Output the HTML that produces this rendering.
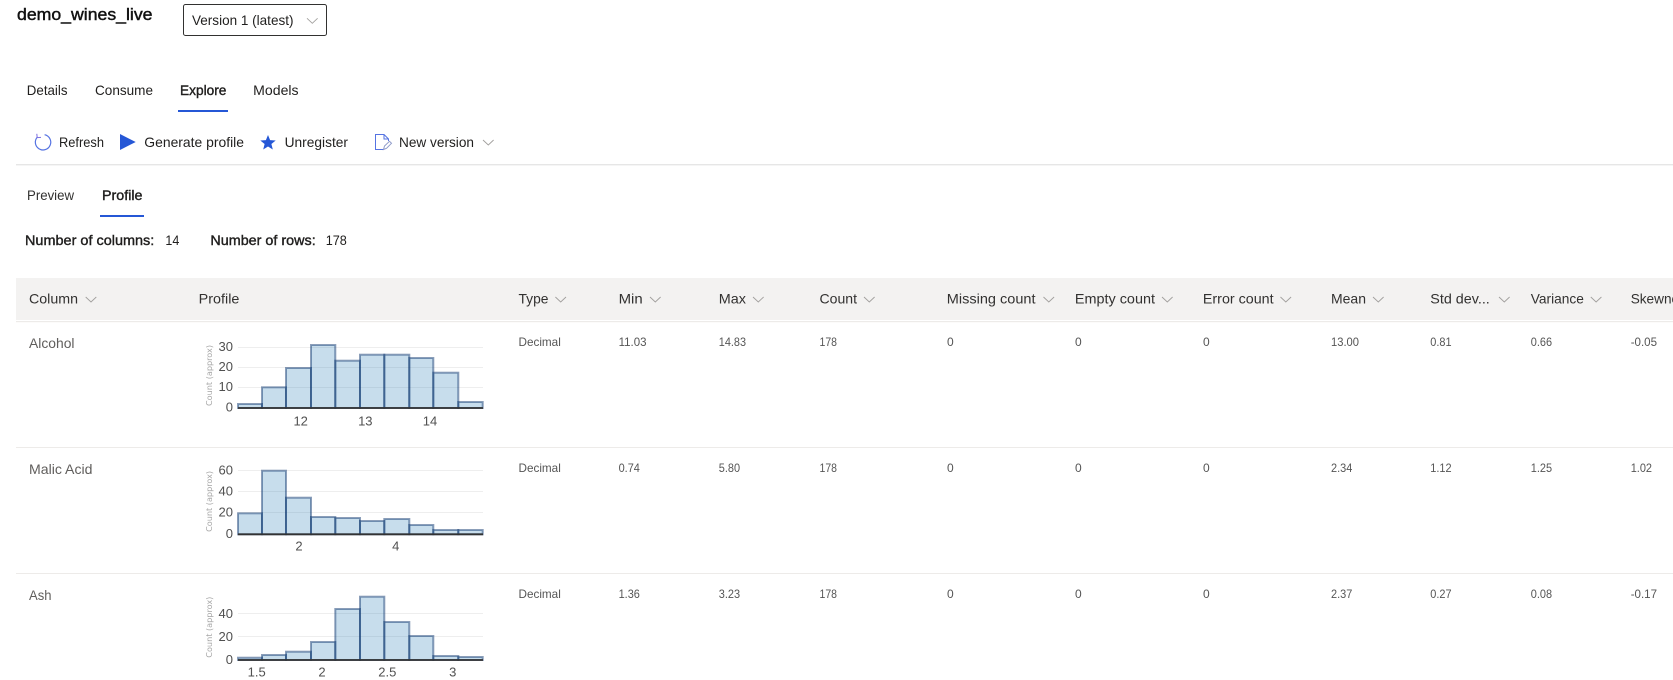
<!DOCTYPE html>
<html lang="en"><head><meta charset="utf-8"><title>demo_wines_live</title>
<style>
html,body{margin:0;padding:0;background:#fff;width:1673px;height:680px;overflow:hidden}
svg{display:block}
text{font-family:"Liberation Sans",sans-serif}
.h{font-size:14px;fill:#323130}
.b{font-size:14px;fill:#201f1e}
.s{font-size:14px;fill:#201f1e;stroke:#201f1e;stroke-width:.4}
.n{font-size:14px;fill:#605e5c}
.v{font-size:12px;fill:#555}
.t{font-size:13px;fill:#505050}
.yl{font-size:8px;fill:#a6a6a6;font-family:"DejaVu Sans",sans-serif}
.ch{fill:none;stroke:#a19f9d;stroke-width:.9}
.bar rect{fill:rgba(31,119,180,.25);stroke:rgba(8,48,107,.47);stroke-width:2}
.g{stroke:#eee;stroke-width:1}
.ax{stroke:#333;stroke-width:1.8}
</style></head><body>
<svg xmlns="http://www.w3.org/2000/svg" width="1673" height="680" viewBox="0 0 1673 680">
<defs>
<polyline id="c" class="ch" points="0,0 5.3,5 10.6,0"/>
</defs>

<!-- title -->
<text x="17" y="20" font-size="17" fill="#111" stroke="#111" stroke-width=".45" textLength="135.5" lengthAdjust="spacingAndGlyphs">demo_wines_live</text>
<rect x="183.5" y="4.5" width="143" height="31" rx="2" fill="#fff" stroke="#323130" stroke-width="1"/>
<text class="b" x="192" y="25" textLength="101.5" lengthAdjust="spacingAndGlyphs">Version 1 (latest)</text>
<use href="#c" x="307" y="18.3"/>

<!-- tabs -->
<text class="b" x="26.8" y="95" textLength="40.7" lengthAdjust="spacingAndGlyphs">Details</text>
<text class="b" x="95" y="95" textLength="58" lengthAdjust="spacingAndGlyphs">Consume</text>
<text class="s" x="180" y="95" textLength="46.4" lengthAdjust="spacingAndGlyphs">Explore</text>
<text class="b" x="253.2" y="95" textLength="45.4" lengthAdjust="spacingAndGlyphs">Models</text>
<rect x="178" y="110" width="50" height="2" fill="#2557d6"/>

<!-- toolbar -->
<path d="M37.4,137 A7.7,7.7 0 1 0 44.6,134.7" fill="none" stroke="#5573e2" stroke-width="1.2"/>
<path d="M36.8,133.8 L37.2,137.6 L41,137.4" fill="none" stroke="#7d6fe0" stroke-width="1"/>
<text class="b" x="59" y="147" textLength="45" lengthAdjust="spacingAndGlyphs">Refresh</text>
<polygon points="120,134 135.7,142 120,150" fill="#2557d6"/>
<text class="b" x="144.3" y="147" textLength="99.7" lengthAdjust="spacingAndGlyphs">Generate profile</text>
<polygon points="268,135 270.1,140.1 275.7,140.5 271.4,144 272.8,149.5 268,146.5 263.2,149.5 264.6,144 260.3,140.5 265.9,140.1" fill="#2557d6"/>
<text class="b" x="284.6" y="147" textLength="63.4" lengthAdjust="spacingAndGlyphs">Unregister</text>
<path d="M384,149.5 H375.5 V134.5 H384 L388.5,139 V141 M384,134.5 V139 H388.5" fill="none" stroke="#5573e2" stroke-width="1"/>
<path d="M383.5,149.5 L384.5,146 L389.5,141.3 L391.5,143.3 L386.5,148.3 Z" fill="none" stroke="#8f9bc9" stroke-width="1"/>
<text class="b" x="399" y="147" textLength="75" lengthAdjust="spacingAndGlyphs">New version</text>
<use href="#c" x="483" y="140"/>
<rect x="16" y="164" width="1657" height="1.4" fill="#e6e6e6"/>

<!-- sub tabs -->
<text class="b" x="27" y="200" textLength="47" lengthAdjust="spacingAndGlyphs" style="fill:#323130">Preview</text>
<text class="s" x="102" y="200" textLength="40.5" lengthAdjust="spacingAndGlyphs">Profile</text>
<rect x="100" y="215" width="44" height="2" fill="#2557d6"/>

<text class="s" x="25" y="245" textLength="129.3" lengthAdjust="spacingAndGlyphs">Number of columns:</text>
<text class="b" x="165.4" y="245" textLength="13.9" lengthAdjust="spacingAndGlyphs">14</text>
<text class="s" x="210.4" y="245" textLength="105.3" lengthAdjust="spacingAndGlyphs">Number of rows:</text>
<text class="b" x="325.7" y="245" textLength="21.1" lengthAdjust="spacingAndGlyphs">178</text>

<!-- table header -->
<rect x="16" y="278" width="1657" height="42" fill="#f3f2f1"/>
<rect x="16" y="321" width="1657" height="1.2" fill="#edebe9"/>
<text class="h" x="29" y="303.3" textLength="49" lengthAdjust="spacingAndGlyphs">Column</text><use href="#c" x="85.7" y="297"/>
<text class="h" x="198.7" y="303.3" textLength="40.7" lengthAdjust="spacingAndGlyphs">Profile</text>
<text class="h" x="518.5" y="303.3" textLength="30" lengthAdjust="spacingAndGlyphs">Type</text><use href="#c" x="555.4" y="297"/>
<text class="h" x="618.6" y="303.3" textLength="24.1" lengthAdjust="spacingAndGlyphs">Min</text><use href="#c" x="650" y="297"/>
<text class="h" x="718.8" y="303.3" textLength="27.2" lengthAdjust="spacingAndGlyphs">Max</text><use href="#c" x="753" y="297"/>
<text class="h" x="819.5" y="303.3" textLength="37.5" lengthAdjust="spacingAndGlyphs">Count</text><use href="#c" x="864" y="297"/>
<text class="h" x="946.8" y="303.3" textLength="88.7" lengthAdjust="spacingAndGlyphs">Missing count</text><use href="#c" x="1043.5" y="297"/>
<text class="h" x="1074.9" y="303.3" textLength="80.1" lengthAdjust="spacingAndGlyphs">Empty count</text><use href="#c" x="1162" y="297"/>
<text class="h" x="1202.9" y="303.3" textLength="70.7" lengthAdjust="spacingAndGlyphs">Error count</text><use href="#c" x="1280.5" y="297"/>
<text class="h" x="1331" y="303.3" textLength="35" lengthAdjust="spacingAndGlyphs">Mean</text><use href="#c" x="1373" y="297"/>
<text class="h" x="1430.3" y="303.3" textLength="59.5" lengthAdjust="spacingAndGlyphs">Std dev...</text><use href="#c" x="1499" y="297"/>
<text class="h" x="1530.8" y="303.3" textLength="53.1" lengthAdjust="spacingAndGlyphs">Variance</text><use href="#c" x="1590.8" y="297"/>
<text class="h" x="1630.7" y="303.3" textLength="62" lengthAdjust="spacingAndGlyphs">Skewness</text>

<!-- row lines -->
<rect x="16" y="447" width="1657" height="1" fill="#edebe9"/>
<rect x="16" y="573" width="1657" height="1" fill="#edebe9"/>

<!-- row 1 -->
<text class="n" x="29" y="348" textLength="45.5" lengthAdjust="spacingAndGlyphs">Alcohol</text>
<text class="v" x="518.5" y="346" textLength="42.3" lengthAdjust="spacingAndGlyphs">Decimal</text>
<text class="v" x="618.6" y="346" textLength="27.9" lengthAdjust="spacingAndGlyphs">11.03</text>
<text class="v" x="718.8" y="346" textLength="27.2" lengthAdjust="spacingAndGlyphs">14.83</text>
<text class="v" x="819.5" y="346" textLength="17.5" lengthAdjust="spacingAndGlyphs">178</text>
<text class="v" x="947" y="346">0</text><text class="v" x="1075" y="346">0</text><text class="v" x="1203" y="346">0</text>
<text class="v" x="1331" y="346" textLength="28" lengthAdjust="spacingAndGlyphs">13.00</text>
<text class="v" x="1430.3" y="346" textLength="21.3" lengthAdjust="spacingAndGlyphs">0.81</text>
<text class="v" x="1530.8" y="346" textLength="21.3" lengthAdjust="spacingAndGlyphs">0.66</text>
<text class="v" x="1630.7" y="346" textLength="26.3" lengthAdjust="spacingAndGlyphs">-0.05</text>

<!-- row 2 -->
<text class="n" x="29" y="474" textLength="63.5" lengthAdjust="spacingAndGlyphs">Malic Acid</text>
<text class="v" x="518.5" y="472" textLength="42.3" lengthAdjust="spacingAndGlyphs">Decimal</text>
<text class="v" x="618.6" y="472" textLength="21.3" lengthAdjust="spacingAndGlyphs">0.74</text>
<text class="v" x="718.8" y="472" textLength="21.3" lengthAdjust="spacingAndGlyphs">5.80</text>
<text class="v" x="819.5" y="472" textLength="17.5" lengthAdjust="spacingAndGlyphs">178</text>
<text class="v" x="947" y="472">0</text><text class="v" x="1075" y="472">0</text><text class="v" x="1203" y="472">0</text>
<text class="v" x="1331" y="472" textLength="21.3" lengthAdjust="spacingAndGlyphs">2.34</text>
<text class="v" x="1430.3" y="472" textLength="21.3" lengthAdjust="spacingAndGlyphs">1.12</text>
<text class="v" x="1530.8" y="472" textLength="21.3" lengthAdjust="spacingAndGlyphs">1.25</text>
<text class="v" x="1630.7" y="472" textLength="21.3" lengthAdjust="spacingAndGlyphs">1.02</text>

<!-- row 3 -->
<text class="n" x="29" y="600" textLength="22.5" lengthAdjust="spacingAndGlyphs">Ash</text>
<text class="v" x="518.5" y="598" textLength="42.3" lengthAdjust="spacingAndGlyphs">Decimal</text>
<text class="v" x="618.6" y="598" textLength="21.3" lengthAdjust="spacingAndGlyphs">1.36</text>
<text class="v" x="718.8" y="598" textLength="21.3" lengthAdjust="spacingAndGlyphs">3.23</text>
<text class="v" x="819.5" y="598" textLength="17.5" lengthAdjust="spacingAndGlyphs">178</text>
<text class="v" x="947" y="598">0</text><text class="v" x="1075" y="598">0</text><text class="v" x="1203" y="598">0</text>
<text class="v" x="1331" y="598" textLength="21.3" lengthAdjust="spacingAndGlyphs">2.37</text>
<text class="v" x="1430.3" y="598" textLength="21.3" lengthAdjust="spacingAndGlyphs">0.27</text>
<text class="v" x="1530.8" y="598" textLength="21.3" lengthAdjust="spacingAndGlyphs">0.08</text>
<text class="v" x="1630.7" y="598" textLength="26.3" lengthAdjust="spacingAndGlyphs">-0.17</text>

<!-- chart 1 -->
<g class="g"><line x1="238" x2="483" y1="347.5" y2="347.5"/><line x1="238" x2="483" y1="367.5" y2="367.5"/><line x1="238" x2="483" y1="387.5" y2="387.5"/></g>
<g class="bar">
<rect x="238" y="404" width="24" height="4"/><rect x="262" y="387.3" width="24" height="20.7"/><rect x="286" y="368" width="25" height="40"/><rect x="311" y="345" width="24.3" height="63"/><rect x="335.3" y="360.7" width="24.7" height="47.3"/><rect x="360" y="354.7" width="24.3" height="53.3"/><rect x="384.3" y="354.7" width="25" height="53.3"/><rect x="409.3" y="358" width="24" height="50"/><rect x="433.3" y="372.7" width="25" height="35.3"/><rect x="458.3" y="402" width="24.4" height="6"/>
</g>
<line class="ax" x1="238" x2="483" y1="408" y2="408"/>
<text class="t" x="233" y="351" text-anchor="end">30</text><text class="t" x="233" y="371" text-anchor="end">20</text><text class="t" x="233" y="391" text-anchor="end">10</text><text class="t" x="233" y="411.5" text-anchor="end">0</text>
<text class="t" x="300.7" y="425.3" text-anchor="middle">12</text><text class="t" x="365.3" y="425.3" text-anchor="middle">13</text><text class="t" x="430" y="425.3" text-anchor="middle">14</text>
<text class="yl" transform="translate(212,375.5) rotate(-90)" text-anchor="middle" textLength="61" lengthAdjust="spacingAndGlyphs">Count (approx)</text>

<!-- chart 2 -->
<g class="g"><line x1="238" x2="483" y1="470.5" y2="470.5"/><line x1="238" x2="483" y1="491.5" y2="491.5"/><line x1="238" x2="483" y1="512.5" y2="512.5"/></g>
<g class="bar">
<rect x="238" y="513.3" width="24" height="21"/><rect x="262" y="470.7" width="24" height="63.6"/><rect x="286" y="497.7" width="25" height="36.6"/><rect x="311" y="517" width="24.3" height="17.3"/><rect x="335.3" y="518" width="24.7" height="16.3"/><rect x="360" y="521" width="24.3" height="13.3"/><rect x="384.3" y="519" width="25" height="15.3"/><rect x="409.3" y="525" width="24" height="9.3"/><rect x="433.3" y="530" width="25" height="4.3"/><rect x="458.3" y="530" width="24.4" height="4.3"/>
</g>
<line class="ax" x1="238" x2="483" y1="534.3" y2="534.3"/>
<text class="t" x="233" y="474.3" text-anchor="end">60</text><text class="t" x="233" y="495.3" text-anchor="end">40</text><text class="t" x="233" y="516.3" text-anchor="end">20</text><text class="t" x="233" y="537.8" text-anchor="end">0</text>
<text class="t" x="299" y="550.7" text-anchor="middle">2</text><text class="t" x="395.7" y="550.7" text-anchor="middle">4</text>
<text class="yl" transform="translate(212,501.4) rotate(-90)" text-anchor="middle" textLength="61" lengthAdjust="spacingAndGlyphs">Count (approx)</text>

<!-- chart 3 -->
<g class="g"><line x1="238" x2="483" y1="613.5" y2="613.5"/><line x1="238" x2="483" y1="636.5" y2="636.5"/></g>
<g class="bar">
<rect x="238" y="657.7" width="24" height="2.3"/><rect x="262" y="655" width="24" height="5"/><rect x="286" y="651.7" width="25" height="8.3"/><rect x="311" y="642" width="24.3" height="18"/><rect x="335.3" y="609" width="24.7" height="51"/><rect x="360" y="596.7" width="24.3" height="63.3"/><rect x="384.3" y="622" width="25" height="38"/><rect x="409.3" y="636" width="24" height="24"/><rect x="433.3" y="656" width="25" height="4"/><rect x="458.3" y="657" width="24.4" height="3"/>
</g>
<line class="ax" x1="238" x2="483" y1="660" y2="660"/>
<text class="t" x="233" y="618" text-anchor="end">40</text><text class="t" x="233" y="641" text-anchor="end">20</text><text class="t" x="233" y="664" text-anchor="end">0</text>
<text class="t" x="256.7" y="676.5" text-anchor="middle">1.5</text><text class="t" x="322" y="676.5" text-anchor="middle">2</text><text class="t" x="387.3" y="676.5" text-anchor="middle">2.5</text><text class="t" x="452.7" y="676.5" text-anchor="middle">3</text>
<text class="yl" transform="translate(212,627.2) rotate(-90)" text-anchor="middle" textLength="61" lengthAdjust="spacingAndGlyphs">Count (approx)</text>
</svg>
</body></html>
